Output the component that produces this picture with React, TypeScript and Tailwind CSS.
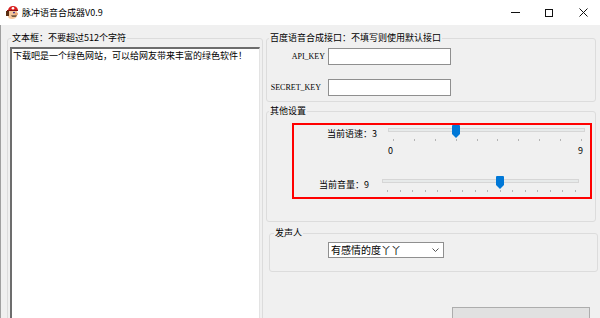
import type { ReactNode } from "react"

function GroupBox({
  label,
  className,
  legendClass,
  children,
}: {
  label: string
  className: string
  legendClass: string
  children: ReactNode
}) {
  return (
    <fieldset className={`min-w-0 border border-[#dcdcdc] rounded-[3px] ${className}`}>
      <legend className={`px-[1px] text-[9px] leading-[12px] ${legendClass}`}>{label}</legend>
      {children}
    </fieldset>
  )
}

function Slider({ value, max }: { value: number; max: number }) {
  const ticks = Array.from({ length: max + 1 }, (_, i) => 5 + (i * 188) / max)
  const thumb = 5 + (value * 188) / max
  return (
    <div className="relative w-[197px] h-[18px]">
      <div className="absolute left-0 right-0 top-[3px] h-[4px] bg-[#e7eaea] border border-[#d6d6d6]" />
      {ticks.map((x, i) => (
        <div key={i} className="absolute top-[14px] w-[1px] h-[2px] bg-[#b4b4b4]" style={{ left: Math.round(x) }} />
      ))}
      <svg
        className="absolute top-0"
        style={{ left: Math.round(thumb) - 4 }}
        width="8"
        height="13"
        viewBox="0 0 8 13"
      >
        <path d="M1 0H7Q8 0 8 1V9L4 13L0 9V1Q0 0 1 0Z" fill="#0078d7" />
      </svg>
    </div>
  )
}

function MarioIcon() {
  return (
    <svg width="14" height="14" viewBox="0 0 14 14" className="ml-[5px]">
      <path d="M3 4Q4 0 8 0Q12 0 13 4Z" fill="#d81e1e" />
      <circle cx="8" cy="2.3" r="1.3" fill="#fff" />
      <path d="M2 4H13V5H2Z" fill="#8a1010" />
      <path d="M3 5H12V10Q11 13 7 13Q3 13 3 10Z" fill="#f6c79a" />
      <path d="M1 5H4V10H1Z" fill="#5a2e12" />
      <circle cx="9" cy="6.6" r="0.9" fill="#1a1a8a" />
      <ellipse cx="11.3" cy="8" rx="1.8" ry="1.4" fill="#f0a878" />
      <path d="M6 9.4H12Q11 11 9 10.6Q7 11 6 9.4Z" fill="#2a1a10" />
    </svg>
  )
}

export default function App() {
  return (
    <div className="w-[600px] h-[318px] overflow-hidden bg-[#f0f0f0] flex flex-col text-black font-['Noto_Sans_CJK_SC',sans-serif]">
      <div className="h-[25px] shrink-0 bg-white flex items-center">
        <MarioIcon />
        <span className="ml-[3px] text-[9px] leading-[12px]">脉冲语音合成器V0.9</span>
        <div className="ml-auto flex h-full">
          <div className="w-[34px] flex items-center justify-center">
            <svg width="9" height="9" viewBox="0 0 9 9">
              <path d="M0 4.5H9" stroke="#111" strokeWidth="1" />
            </svg>
          </div>
          <div className="w-[34px] flex items-center justify-center">
            <svg width="8" height="8" viewBox="0 0 8 8">
              <rect x="0.5" y="0.5" width="7" height="7" fill="none" stroke="#111" strokeWidth="1" />
            </svg>
          </div>
          <div className="w-[34px] flex items-center justify-center">
            <svg width="9" height="9" viewBox="0 0 9 9">
              <path d="M0.5 0.5L8.5 8.5M8.5 0.5L0.5 8.5" stroke="#111" strokeWidth="1" />
            </svg>
          </div>
        </div>
      </div>

      <div className="flex flex-1 min-h-0 border-l border-[#a0a0a0]">
        <GroupBox label="文本框：不要超过512个字符" className="ml-[6px] mt-[7px] w-[256px] h-[300px] shrink-0" legendClass="ml-[3px]">
          <div className="ml-[2px] mt-[3px] w-[250px] h-[280px] bg-white border-t-2 border-l-2 border-r border-b border-t-[#6d6d6d] border-l-[#6d6d6d] border-r-[#e3e3e3] border-b-[#e3e3e3] pl-[1px] pt-[1px] text-[9px] leading-[12px]">
            下载吧是一个绿色网站，可以给网友带来丰富的绿色软件！
          </div>
        </GroupBox>

        <div className="ml-[3px] w-[330px] flex flex-col">
          <GroupBox label="百度语音合成接口：不填写则使用默认接口" className="mt-[7px] pb-[5px]" legendClass="ml-[2px]">
            <div className="mt-[4px] flex items-center">
              <span className="w-[58px] text-right text-[8px] leading-[10px] font-['Liberation_Serif',serif]">API_KEY</span>
              <div className="ml-[3px] w-[123px] h-[17px] bg-white border border-[#8f8f8f]" />
            </div>
            <div className="mt-[14px] flex items-center">
              <span className="w-[58px] pr-[4px] text-right text-[8px] leading-[10px] font-['Liberation_Serif',serif]">SECRET_KEY</span>
              <div className="ml-[3px] w-[123px] h-[17px] bg-white border border-[#8f8f8f]" />
            </div>
          </GroupBox>

          <GroupBox label="其他设置" className="mt-[3px] pb-[22px]" legendClass="ml-[2px]">
            <div className="ml-[25px] mt-[6px] w-[300px] h-[76px] border-2 border-[#ff0000]">
              <div className="flex items-start">
                <span className="mt-[3px] w-[83px] text-right text-[9px] leading-[12px]">当前语速：3</span>
                <div className="ml-[11px]">
                  <Slider value={3} max={9} />
                </div>
              </div>
              <div className="ml-[94px] mt-[2px] w-[195px] flex justify-between text-[9px] leading-[12px]">
                <span>0</span>
                <span>9</span>
              </div>
              <div className="mt-[19px] flex items-start">
                <span className="mt-[3px] w-[75px] text-right text-[9px] leading-[12px]">当前音量：9</span>
                <div className="ml-[13px]">
                  <Slider value={9} max={15} />
                </div>
              </div>
            </div>
          </GroupBox>

          <GroupBox label="发声人" className="ml-[3px] mt-[5px] w-[329px] pb-[13px]" legendClass="ml-[4px]">
            <div className="ml-[58px] mt-[3px] w-[116px] h-[16px] bg-white border border-[#8f8f8f] flex items-center pl-[2px] pr-[4px]">
              <span className="flex-1 text-[10px] leading-[12px]">有感情的度丫丫</span>
              <svg width="7" height="4" viewBox="0 0 7 4">
                <path d="M0.5 0.5L3.5 3.5L6.5 0.5" fill="none" stroke="#555" strokeWidth="1" />
              </svg>
            </div>
          </GroupBox>

          <div className="ml-[186px] mt-[35px] w-[138px] h-[24px] shrink-0 bg-[#e1e1e1] border border-[#adadad]" />
        </div>
      </div>
    </div>
  )
}
